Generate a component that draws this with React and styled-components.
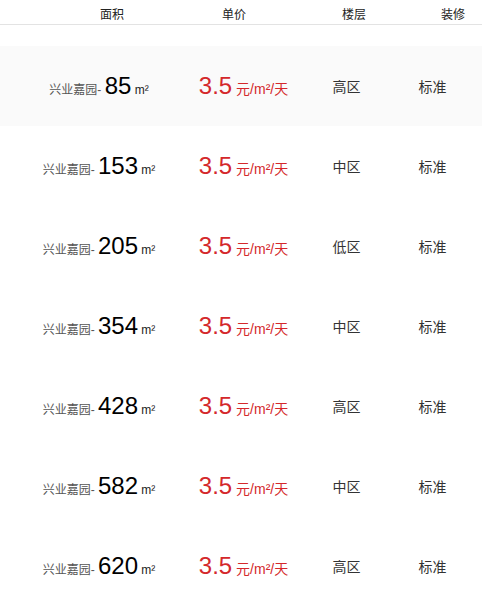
import styled, { createGlobalStyle } from 'styled-components';

const GlobalStyle = createGlobalStyle`
  body {
    margin: 0;
    background: #fff;
    font-family: Arial, "Liberation Sans", "Noto Sans CJK SC", sans-serif;
  }
`;

const Page = styled.div`
  width: 482px;
`;

const Header = styled.div`
  display: grid;
  grid-template-columns: 120px 124px 116px 1fr;
  align-items: end;
  height: 25px;
  box-sizing: border-box;
  padding: 0 17px 3px 52px;
  border-bottom: 1px solid #e3e3e3;
  margin-bottom: 21px;
`;

const HeadCell = styled.div`
  font-size: 12px;
  line-height: 12px;
  color: #222;
  text-align: ${(p) => (p.$right ? 'right' : 'center')};
`;

const Row = styled.div`
  display: grid;
  grid-template-columns: 198px 91px 115px 57px 1fr;
  align-items: center;
  height: 80px;
  background: ${(p) => (p.$shaded ? '#fafafa' : '#fff')};
`;

const Cell = styled.div`
  text-align: center;
  white-space: nowrap;
  font-size: 14px;
  color: #333;
`;

const Estate = styled.span`
  font-size: 12px;
  color: #555;
`;

const Big = styled.span`
  font-size: 24px;
  color: ${(p) => p.$color || '#000'};
`;

const Unit = styled.span`
  font-size: ${(p) => p.$size || 12}px;
  color: ${(p) => p.$color || '#222'};
`;

const red = '#d4282b';

const rows = [
  { area: 85, floor: '高区' },
  { area: 153, floor: '中区' },
  { area: 205, floor: '低区' },
  { area: 354, floor: '中区' },
  { area: 428, floor: '高区' },
  { area: 582, floor: '中区' },
  { area: 620, floor: '高区' },
];

export default function App() {
  return (
    <Page>
      <GlobalStyle />
      <Header>
        <HeadCell>面积</HeadCell>
        <HeadCell>单价</HeadCell>
        <HeadCell>楼层</HeadCell>
        <HeadCell $right>装修</HeadCell>
      </Header>
      {rows.map((r, i) => (
        <Row key={r.area} $shaded={i === 0}>
          <Cell>
            <Estate>兴业嘉园- </Estate>
            <Big>{r.area}</Big>
            <Unit> m²</Unit>
          </Cell>
          <Cell>
            <Big $color={red}>3.5</Big>
            <Unit $size={14} $color={red}> 元/m²/天</Unit>
          </Cell>
          <Cell>{r.floor}</Cell>
          <Cell>标准</Cell>
        </Row>
      ))}
    </Page>
  );
}
